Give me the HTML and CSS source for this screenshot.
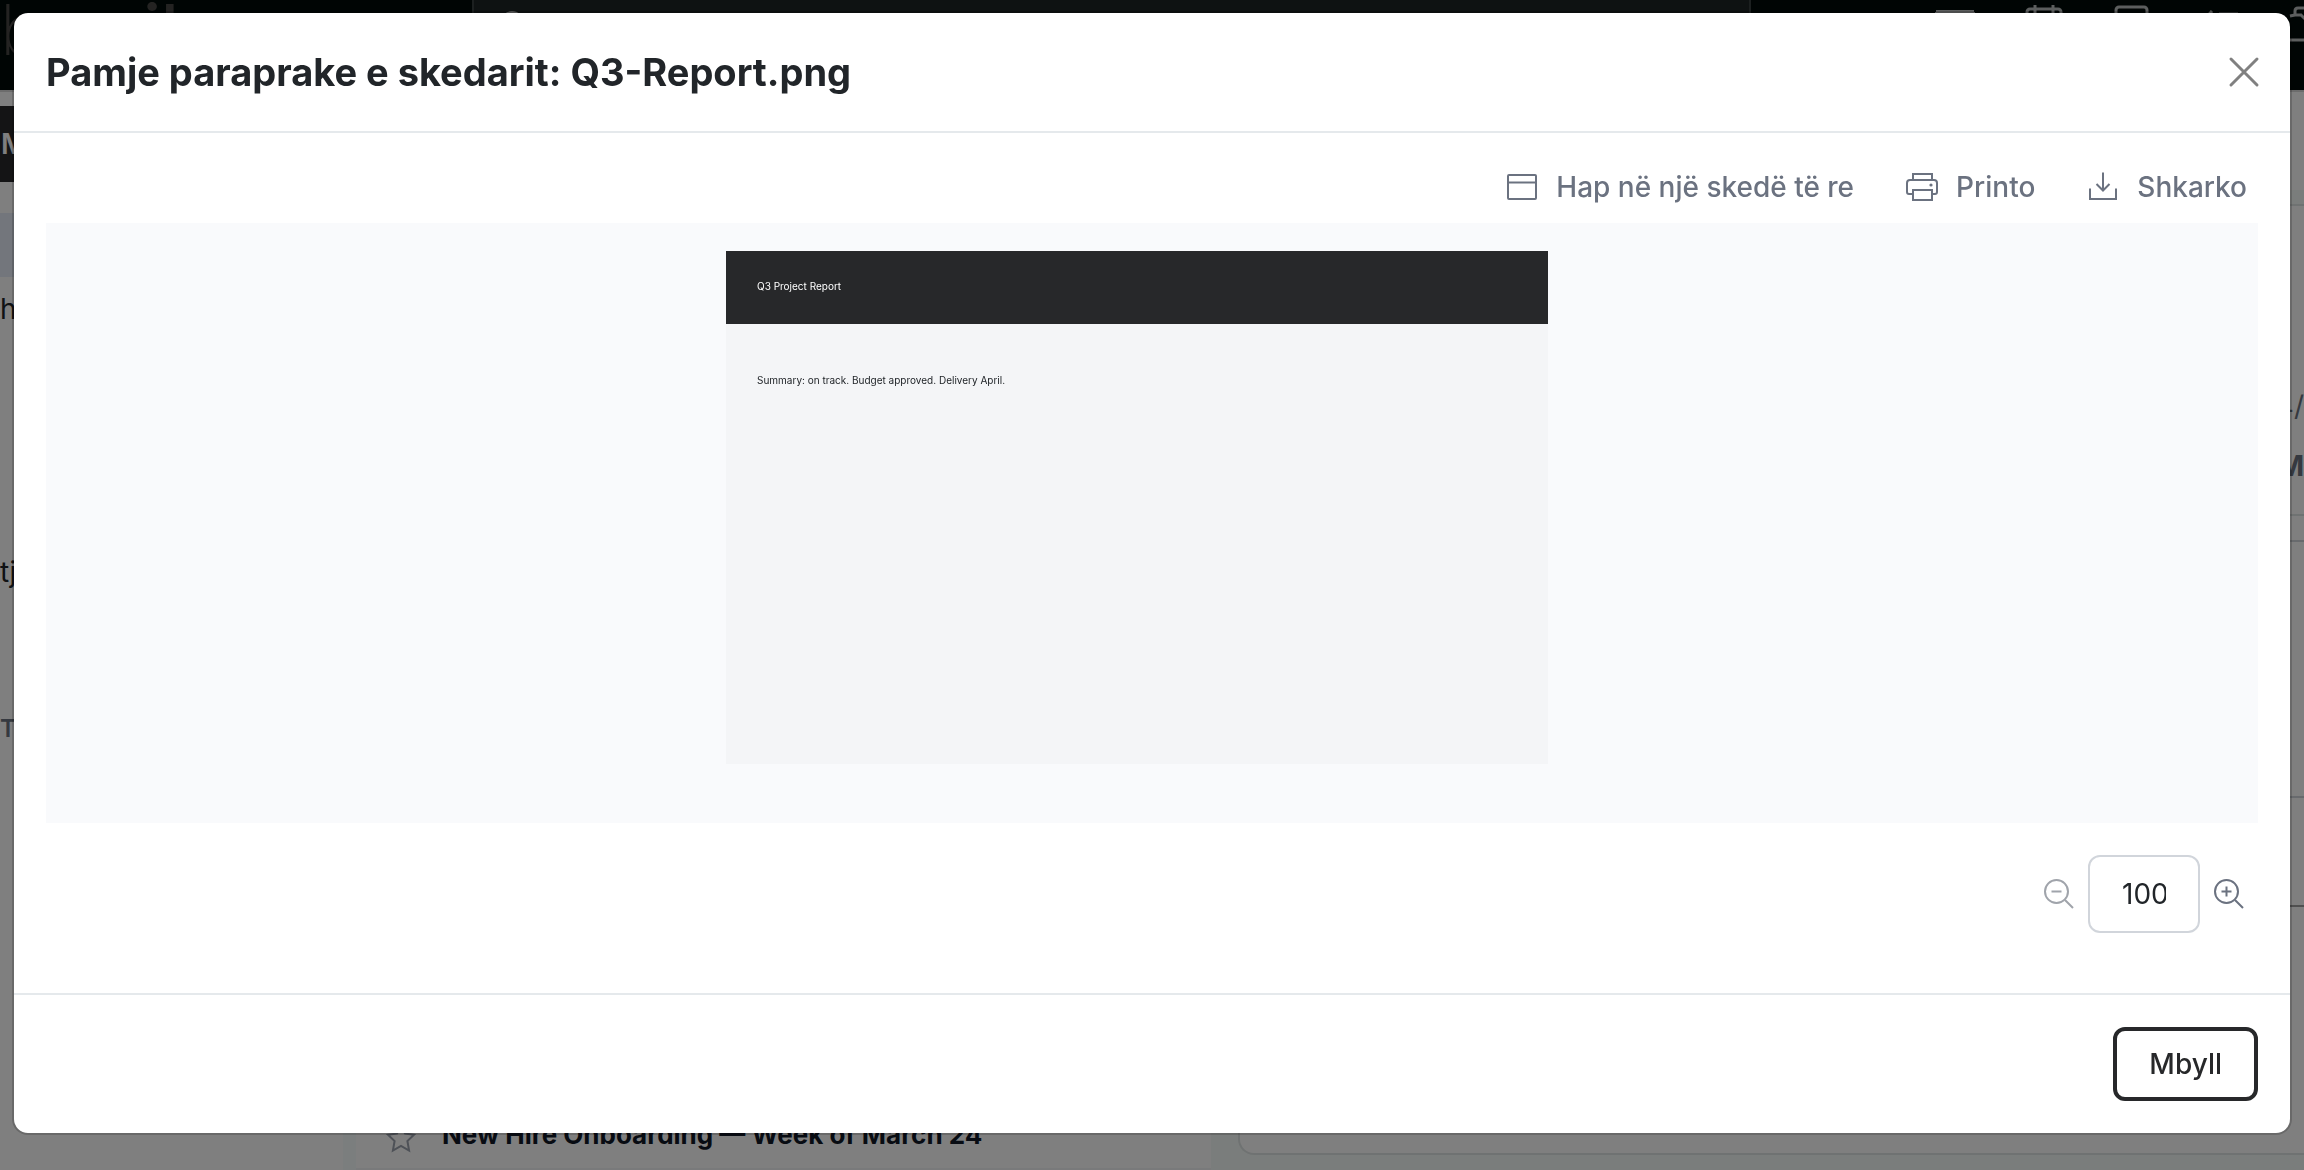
FILE: index.html
```html
<!DOCTYPE html>
<html lang="sq">
<head>
    <meta charset="UTF-8">
    <meta name="viewport" content="width=device-width, initial-scale=1.0">
    <title>Q3-Report.png</title>
    <link rel="stylesheet" href="styles.css">
</head>
<body>
    <div class="app" inert>
        <header class="topbar">
            <div class="logo">b<b>mail</b></div>
            <div class="search">
                <svg width="32" height="32" viewBox="0 0 32 32"><circle cx="14" cy="14" r="10"/><path d="M21 21l8 8"/></svg>
            </div>
            <nav class="top-icons">
                <svg width="40" height="36" viewBox="0 0 40 36"><path class="thick" d="M1 8h38"/><path d="M1 8v26h38V8"/></svg>
                <svg width="40" height="36" viewBox="0 0 40 36"><rect x="3" y="5" width="34" height="29" rx="3"/><path d="M11 1v8M29 1v8M3 15h34"/></svg>
                <svg width="36" height="36" viewBox="0 0 36 36"><rect x="2" y="3" width="31" height="30" rx="3"/></svg>
                <svg width="40" height="36" viewBox="0 0 40 36"><path d="M1 12l4 4 8-9M20 10h19M20 26h19"/></svg>
                <svg width="40" height="40" viewBox="0 0 40 40"><path d="M2 12l5-1V7q0-3 3-3h12M7 11h6l6 6M2 36h36"/></svg>
            </nav>
        </header>
        <main class="main">
            <aside class="sidebar">
                <div class="compose">M</div>
                <div class="folder active"></div>
                <div class="folder">h</div>
                <div class="folder more">tj</div>
                <div class="folder tags">T</div>
            </aside>
            <section class="mail-list">
                <div class="mail-row">
                    <svg class="star" width="30" height="30" viewBox="0 0 30 30"><path d="M15 2l4 8.500 9 1.200-6.600 6.300 1.700 9.500L15 23l-8.100 4.500 1.700-9.500L2 11.700l9-1.200z"/></svg>
                    <span>New Hire Onboarding — Week of March 24</span>
                </div>
            </section>
            <section class="reading">
                <div class="toolstrip"></div>
                <div class="mail-card">
                    <div class="mail-meta">
                        <span>4/</span>
                        <strong>M</strong>
                    </div>
                    <div class="mail-gap"></div>
                    <div class="mail-body"></div>
                    <div class="mail-file"></div>
                </div>
            </section>
        </main>
    </div>

    <div class="backdrop">
        <div class="modal" role="dialog" aria-modal="true" aria-labelledby="modal-title">
            <div class="modal-header">
                <h1 id="modal-title">Pamje paraprake e skedarit: Q3-Report.png</h1>
                <button class="close" type="button" aria-label="Mbyll">
                    <svg width="32" height="32" viewBox="0 0 32 32"><path d="M3 3l26 26M29 3L3 29"/></svg>
                </button>
            </div>
            <div class="modal-body">
                <div class="toolbar">
                    <button type="button">
                        <svg width="32" height="32" viewBox="0 0 32 32"><rect x="2" y="4" width="28" height="24" rx="1"/><path d="M2 11.500h28"/></svg>
                        Hap në një skedë të re
                    </button>
                    <button type="button">
                        <svg width="32" height="32" viewBox="0 0 32 32"><path d="M7 9V3h19v6M7 23H3q-2 0-2-2V12q0-3 3-3h24q3 0 3 3v9q0 2-2 2h-3M7 19h19v10H7z"/><circle class="dot" cx="25" cy="14" r="1.600"/></svg>
                        Printo
                    </button>
                    <button type="button">
                        <svg width="32" height="32" viewBox="0 0 32 32"><path d="M16 1.500v18M9.500 13l6.500 6.500 6.500-6.500M3 17.500V28h26V17.500"/></svg>
                        Shkarko
                    </button>
                </div>
                <div class="preview">
                    <article class="page">
                        <header>Q3 Project Report</header>
                        <p>Summary: on track. Budget approved. Delivery April.</p>
                    </article>
                </div>
                <div class="zoom">
                    <button type="button" aria-label="Zvogëlo" disabled>
                        <svg width="32" height="32" viewBox="0 0 32 32"><circle cx="13.500" cy="13.500" r="11.500"/><path d="M22 22l8 8M8.500 13.500h10"/></svg>
                    </button>
                    <input type="text" value="100" aria-label="Zmadhimi">
                    <button type="button" aria-label="Zmadho">
                        <svg width="32" height="32" viewBox="0 0 32 32"><circle cx="13.500" cy="13.500" r="11.500"/><path d="M22 22l8 8M8.500 13.500h10M13.500 8.500v10"/></svg>
                    </button>
                </div>
            </div>
            <div class="modal-footer">
                <button class="btn" type="button">Mbyll</button>
            </div>
        </div>
    </div>
</body>
</html>
```

FILE: styles.css
```css
* {
    box-sizing: border-box;
}
body {
    margin: 0;
    font-family: Inter, "Liberation Sans", sans-serif;
    font-size: 28px;
    color: #212529;
    overflow: hidden;
}
button {
    font: inherit;
    color: inherit;
    background: none;
    border: 0;
    padding: 0;
    cursor: pointer;
}
svg {
    display: block;
    flex: none;
    fill: none;
    stroke: currentColor;
    stroke-width: 2;
}

/* mail app behind the dialog */
.app {
    display: flex;
    flex-direction: column;
    height: 100vh;
    background: #fff;
    overflow: hidden;
}
.topbar {
    display: flex;
    flex: none;
    height: 92px;
    background: #000b09;
    border-bottom: 2px solid #d8d8d8;
    color: #b8bcbc;
}
.logo {
    width: 472px;
    flex: none;
    font-size: 70px;
    line-height: 60px;
    font-weight: 200;
    color: #484644;
}
.logo b {
    font-weight: 500;
}
.search {
    flex: 1;
    height: 76px;
    padding: 8px 24px;
    background: #1c2424;
    border: 2px solid #384040;
    border-top: 0;
}
.top-icons {
    display: flex;
    justify-content: space-between;
    width: 553px;
    padding: 4px 0 0 184px;
    flex: none;
}
.top-icons svg {
    stroke-width: 3;
}
.top-icons svg:last-child {
    margin-right: -24px;
}
.thick {
    stroke-width: 4;
}
.main {
    display: flex;
    flex: 1;
    gap: 13px;
    background: #f6fcfc;
}
.sidebar {
    width: 343px;
    background: #fff;
    padding-top: 14px;
}
.compose {
    height: 76px;
    line-height: 76px;
    padding-left: 1px;
    background: #28282b;
    color: #fff;
    font-weight: 600;
}
.folder {
    height: 64px;
    line-height: 64px;
}
.active {
    margin-top: 31px;
    background: #e6edf9;
}
.more {
    margin-top: 199px;
}
.tags {
    margin-top: 93px;
    font-size: 24px;
    font-weight: 600;
    color: #6b7280;
}
.mail-list {
    display: flex;
    width: 855px;
    align-items: flex-end;
    background: #fff;
    margin-right: -13px;
}
.mail-row {
    display: flex;
    gap: 26px;
    width: 100%;
    height: 64px;
    padding: 13px 30px;
    font-size: 26px;
    line-height: 32px;
    font-weight: 700;
    color: #111827;
    border-bottom: 2px solid #f3f4f6;
}
.star {
    align-self: flex-end;
    margin-bottom: 2px;
    color: #9ca3af;
}
.reading {
    display: flex;
    flex-direction: column;
    flex: 1;
    background: #f5fbf8;
}
.toolstrip {
    height: 112px;
    background: #fff;
    border-bottom: 14px solid #f5fbf8;
}
.mail-card {
    display: flex;
    flex-direction: column;
    flex: 1;
    margin: 0 0 15px 27px;
    background: #fff;
    border: 2px solid #dfe5e4;
    border-right: 0;
    border-radius: 16px 0 0 16px;
}
.mail-meta {
    height: 310px;
    padding: 170px 0 0;
    text-align: right;
    border-bottom: 2px solid #dfe5e4;
    color: #6b7280;
    line-height: 60px;
}
.mail-meta span,
.mail-meta strong {
    display: block;
}
.mail-gap {
    height: 26px;
    border-bottom: 2px solid #d1d5db;
}
.mail-body {
    height: 256px;
    border-bottom: 2px solid #d1d5db;
}
.mail-file {
    height: 109px;
    border-bottom: 2px solid #a0a0a0;
}

/* dialog */
.backdrop {
    position: fixed;
    inset: 0;
    padding: 11px 12px;
    background: rgba(0, 0, 0, 0.5);
}
.modal {
    background: #fff;
    background-clip: padding-box;
    border: 2px solid rgba(0, 0, 0, 0.175);
    border-radius: 16px;
}
.modal-header {
    display: flex;
    align-items: center;
    justify-content: space-between;
    padding: 31px 30px 31px 32px;
    border-bottom: 2px solid #e5e9ec;
}
.modal-header h1 {
    margin: 0;
    font-size: 38px;
    line-height: 56px;
    font-weight: 700;
}
.close {
    color: #808080;
}
.close svg {
    stroke-width: 3;
    stroke-linecap: round;
}
.modal-body {
    padding: 32px 32px 60px;
}
.toolbar {
    display: flex;
    justify-content: flex-end;
    gap: 30px;
    margin-bottom: 14px;
    color: #6b7280;
}
.toolbar button {
    display: flex;
    align-items: center;
    gap: 18px;
    padding: 0 11px;
    line-height: 44px;
    font-weight: 500;
}
.dot {
    fill: currentColor;
    stroke: none;
}
.preview {
    height: 600px;
    padding: 28px 30px 0 0;
    background: #f9fafc;
}
.page {
    width: 822px;
    height: 513px;
    margin: 0 auto;
    background: #f4f5f7;
    font-size: 10px;
    line-height: 17px;
}
.page header {
    padding: 27px 31px 29px;
    background: #27282a;
    color: #fff;
}
.page p {
    margin: 0;
    padding: 48px 31px;
}
.zoom {
    display: flex;
    justify-content: flex-end;
    align-items: center;
    gap: 13px;
    margin-top: 32px;
    padding-right: 13px;
    color: #6b7280;
}
.zoom button:disabled {
    color: #a0a4ab;
    cursor: default;
}
.zoom input {
    width: 112px;
    height: 78px;
    padding: 0 32px;
    font: inherit;
    color: #212529;
    background: #fff;
    border: 2px solid #d1d5db;
    border-radius: 12px;
}
.modal-footer {
    display: flex;
    justify-content: flex-end;
    padding: 32px;
    border-top: 2px solid #e5e9ec;
}
.btn {
    padding: 0 32px;
    line-height: 66px;
    font-weight: 500;
    color: #27282a;
    border: 4px solid #27282a;
    border-radius: 12px;
}
```
